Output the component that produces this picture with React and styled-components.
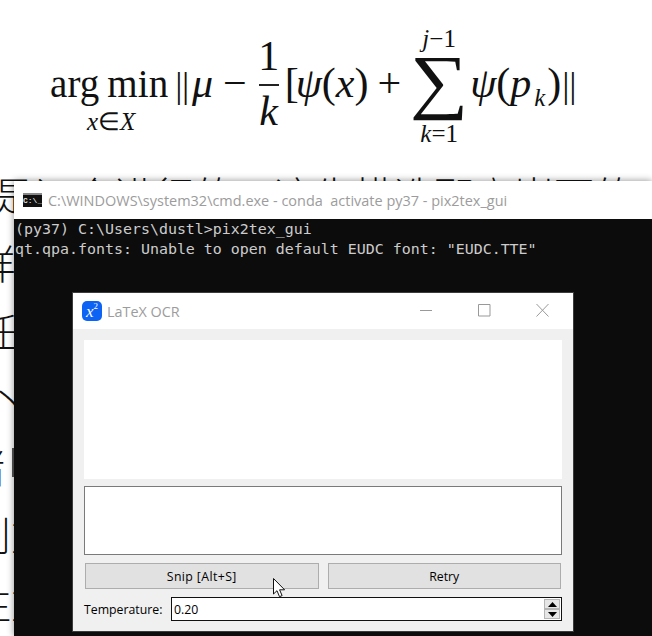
import React from "react";
import styled, { createGlobalStyle } from "styled-components";

const Global = createGlobalStyle`
    html, body {
        margin: 0;
        padding: 0;
        background: #fff;
        overflow: hidden;
    }
`

const BACK_TEXT = [
    { text: "是证仓进行的，这生模选那高岗下的", shift: -6 },
    { text: "详细", shift: -24 },
    { text: "任务", shift: -22 },
    { text: "丶", shift: -12 },
    { text: "诸", shift: -35 },
    { text: "则重", shift: -29 },
    { text: "注重", shift: -29 },
];

function Formula() {
    return (
        <FormulaRow>
            <Limit>
                <LimitWord>arg&#8201;min</LimitWord>
                <LimitSub><i>x</i>∈<i>X</i></LimitSub>
            </Limit>
            <Bars $left={7}>||</Bars>
            <Mu>μ</Mu>
            <Minus>−</Minus>
            <Fraction>
                <FractionTop>1</FractionTop>
                <FractionBar />
                <i>k</i>
            </Fraction>
            <span>[<Psi $left={-3}>ψ</Psi>(<i>x</i>)</span>
            <Plus>+</Plus>
            <SumBlock>
                <SumLimit><i>j</i>−1</SumLimit>
                <Sigma><span>∑</span></Sigma>
                <SumLimit><i>k</i>=1</SumLimit>
            </SumBlock>
            <span><Psi $left={0}>ψ</Psi>(<i>p</i><Sub><i>k</i></Sub>)</span>
            <Bars $left={1}>||</Bars>
        </FormulaRow>
    )
}

function App() {
    return (
        <Page>
            <Global />
            <Formula />
            <Backdrop>
                {BACK_TEXT.map((line) => <BackLine key={line.text} $shift={line.shift}>{line.text}</BackLine>)}
            </Backdrop>
            <ScrollMark />
            <Terminal>
                <TerminalBar>
                    <CmdIcon>C:\_</CmdIcon>
                    <TerminalTitle>C:\WINDOWS\system32\cmd.exe - conda  activate py37 - pix2tex_gui</TerminalTitle>
                </TerminalBar>
                <Console>
                    <ConsoleLine>(py37) C:\Users\dustl&gt;pix2tex_gui</ConsoleLine>
                    <ConsoleLine>qt.qpa.fonts: Unable to open default EUDC font: "EUDC.TTE"</ConsoleLine>
                    <Dialog>
                        <DialogBar>
                            <AppIcon><i>x</i><sup>2</sup></AppIcon>
                            <DialogTitle>LaTeX OCR</DialogTitle>
                            <WinControls>
                                <svg width="12" height="14" viewBox="0 0 12 14"><path d="M0 6.500h12" stroke="#999" fill="none" /></svg>
                                <svg width="14" height="14" viewBox="0 0 14 14"><path d="M1.500.500h11.500v11.500H1.500z" stroke="#999" fill="none" /></svg>
                                <svg width="13" height="14" viewBox="0 0 13 14"><path d="M.5 0l12 12.500M12.500 0l-12 12.500" stroke="#999" fill="none" /></svg>
                            </WinControls>
                        </DialogBar>
                        <DialogBody>
                            <Preview />
                            <Output />
                            <ButtonRow>
                                <PushButton $spacing={0.4}>Snip [Alt+S]</PushButton>
                                <PushButton $spacing={0}>Retry</PushButton>
                            </ButtonRow>
                            <TempRow>
                                <TempLabel>Temperature:</TempLabel>
                                <SpinBox>
                                    <span>0.20</span>
                                    <SpinButtons>
                                        <SpinButton><svg width="9" height="5" viewBox="0 0 9 5"><path d="M4.500 0L9 5H0z" /></svg></SpinButton>
                                        <SpinButton><svg width="9" height="5" viewBox="0 0 9 5"><path d="M0 0h9L4.500 5z" /></svg></SpinButton>
                                    </SpinButtons>
                                </SpinBox>
                            </TempRow>
                        </DialogBody>
                        <Pointer width="13" height="20" viewBox="0 0 13 20">
                            <path d="M.5.500v15.500l3.500-3.300 2.500 6 2.600-1.100-2.500-5.800h5z" fill="#fff" stroke="#111" />
                        </Pointer>
                    </Dialog>
                </Console>
            </Terminal>
        </Page>
    )
}

export default App;

const Page = styled.div`
    position: relative;
    width: 652px;
    height: 636px;
    overflow: hidden;
    background: #fff;
`
const FormulaRow = styled.div`
    display: flex;
    align-items: center;
    height: 164px;
    padding: 3px 0 1px 50px;
    box-sizing: border-box;
    font-family: "Liberation Serif", serif;
    font-size: 42px;
    line-height: 1;
    color: #111;
    white-space: nowrap;
`
const Limit = styled.div`
    display: flex;
    flex-direction: column;
    margin-bottom: -32px;
`
const LimitWord = styled.span`
    font-size: 39px;
    letter-spacing: 0.1px;
`
const LimitSub = styled.div`
    margin: 6px 0 0 37px;
    font-size: 25px;
`
const Bars = styled.span`
    margin: 4px 0 0 ${(p) => p.$left}px;
    font-size: 36px;
    letter-spacing: -0.4px;
`
const Mu = styled.i`
    margin-left: 3px;
`
const Psi = styled.i`
    margin-left: ${(p) => p.$left}px;
`
const Minus = styled.span`
    margin: 0 12px 0 10px;
`
const Fraction = styled.div`
    display: flex;
    flex-direction: column;
    align-items: center;
    width: 20px;
    margin-right: 6px;
`
const FractionTop = styled.span`
    display: block;
`
const FractionBar = styled.div`
    width: 20px;
    height: 2px;
    margin: 7px 0 4px;
    background: #222;
`
const Plus = styled.span`
    margin: 0 14px 0 9px;
`
const SumBlock = styled.div`
    display: flex;
    flex-direction: column;
    align-items: center;
    width: 48px;
    margin: 6px 7px 0 0;
`
const SumLimit = styled.div`
    font-size: 25px;
`
const Sigma = styled.div`
    height: 70px;
    font-size: 82px;
    line-height: 70px;
    & span {
        display: block;
        transform: translateY(-4px) scaleY(0.87);
    }
`
const Sub = styled.sub`
    margin: 0 2px 0 3px;
    font-size: 25px;
    line-height: 0;
`
const Backdrop = styled.div`
    font-family: "Liberation Serif", "Noto Sans CJK SC", serif;
    font-size: 40px;
    font-weight: 300;
    line-height: 68px;
    color: #111;
    white-space: nowrap;
`
const BackLine = styled.div`
    height: 68px;
    margin-left: ${(p) => p.$shift}px;
`
const ScrollMark = styled.div`
    position: absolute;
    left: 12px;
    top: 448px;
    width: 2px;
    height: 29px;
    background: #555;
`
const Terminal = styled.div`
    position: absolute;
    left: 14px;
    top: 181px;
    width: 638px;
    height: 455px;
    display: flex;
    flex-direction: column;
    box-shadow: 0 0 7px rgba(0, 0, 0, 0.45);
`
const TerminalBar = styled.div`
    display: flex;
    align-items: center;
    flex: none;
    height: 38px;
    padding-left: 9px;
    background: #fff;
`
const CmdIcon = styled.div`
    flex: none;
    width: 19px;
    height: 14px;
    margin-right: 6px;
    border-top: 2px solid #8a8a8a;
    box-sizing: border-box;
    background: #111;
    color: #ddd;
    font: 700 8px/11px "Liberation Mono", monospace;
    overflow: hidden;
`
const TerminalTitle = styled.div`
    font-family: "Open Sans", sans-serif;
    font-size: 14.47px;
    color: #9c9c9c;
    white-space: pre;
`
const Console = styled.div`
    flex: 1;
    background: #0c0c0c;
`
const ConsoleLine = styled.div`
    height: 20px;
    font-family: "DejaVu Sans Mono", monospace;
    font-size: 14.95px;
    line-height: 20px;
    color: #cccccc;
    padding-left: 1px;
    white-space: pre;
`
const Dialog = styled.div`
    position: relative;
    display: flex;
    flex-direction: column;
    width: 502px;
    height: 340px;
    margin: 33px 0 0 58px;
    box-sizing: border-box;
    border: 1px solid #3c3c3c;
    background: #f0f0f0;
`
const DialogBar = styled.div`
    display: flex;
    align-items: center;
    flex: none;
    height: 36px;
    padding-left: 9px;
    background: #fff;
`
const AppIcon = styled.div`
    flex: none;
    display: flex;
    justify-content: center;
    width: 20px;
    height: 20px;
    border-radius: 5px;
    background: #0d63f3;
    color: #fff;
    font-family: "Liberation Serif", serif;
    font-size: 17px;
    line-height: 21px;
    & sup {
        font-size: 9px;
        line-height: 11px;
        vertical-align: top;
    }
`
const DialogTitle = styled.div`
    margin-left: 5px;
    font-family: "Open Sans", sans-serif;
    font-size: 14.4px;
    color: #9c9c9c;
`
const WinControls = styled.div`
    display: flex;
    align-items: center;
    gap: 45px;
    margin-left: auto;
    padding-right: 24px;
`
const DialogBody = styled.div`
    display: flex;
    flex-direction: column;
    flex: 1;
    padding: 11px 11px 10px 11px;
    color: #000;
    font-family: "Open Sans", sans-serif;
    font-size: 12.3px;
`
const Preview = styled.div`
    height: 139px;
    background: #fff;
`
const Output = styled.div`
    height: 69px;
    margin-top: 7px;
    box-sizing: border-box;
    border: 1px solid #7a7a7a;
    background: #fff;
`
const ButtonRow = styled.div`
    display: flex;
    gap: 9px;
    margin: 8px 1px 0;
`
const PushButton = styled.div`
    flex: 1;
    height: 26px;
    box-sizing: border-box;
    border: 1px solid #adadad;
    background: #e1e1e1;
    text-align: center;
    line-height: 25px;
    letter-spacing: ${(p) => p.$spacing}px;
`
const TempRow = styled.div`
    display: flex;
    align-items: center;
    margin-top: 8px;
`
const TempLabel = styled.div`
    width: 87px;
`
const SpinBox = styled.div`
    flex: 1;
    display: flex;
    align-items: center;
    justify-content: space-between;
    height: 24px;
    box-sizing: border-box;
    border: 1px solid #111;
    padding: 0 1px 0 2px;
    background: #fff;
`
const SpinButtons = styled.div`
    display: flex;
    flex-direction: column;
    width: 16px;
`
const SpinButton = styled.div`
    display: flex;
    align-items: center;
    justify-content: center;
    height: 10px;
    box-sizing: border-box;
    border: 1px solid #b5b5b5;
    background: #e6e6e6;
`
const Pointer = styled.svg`
    position: absolute;
    left: 200px;
    top: 285px;
`
